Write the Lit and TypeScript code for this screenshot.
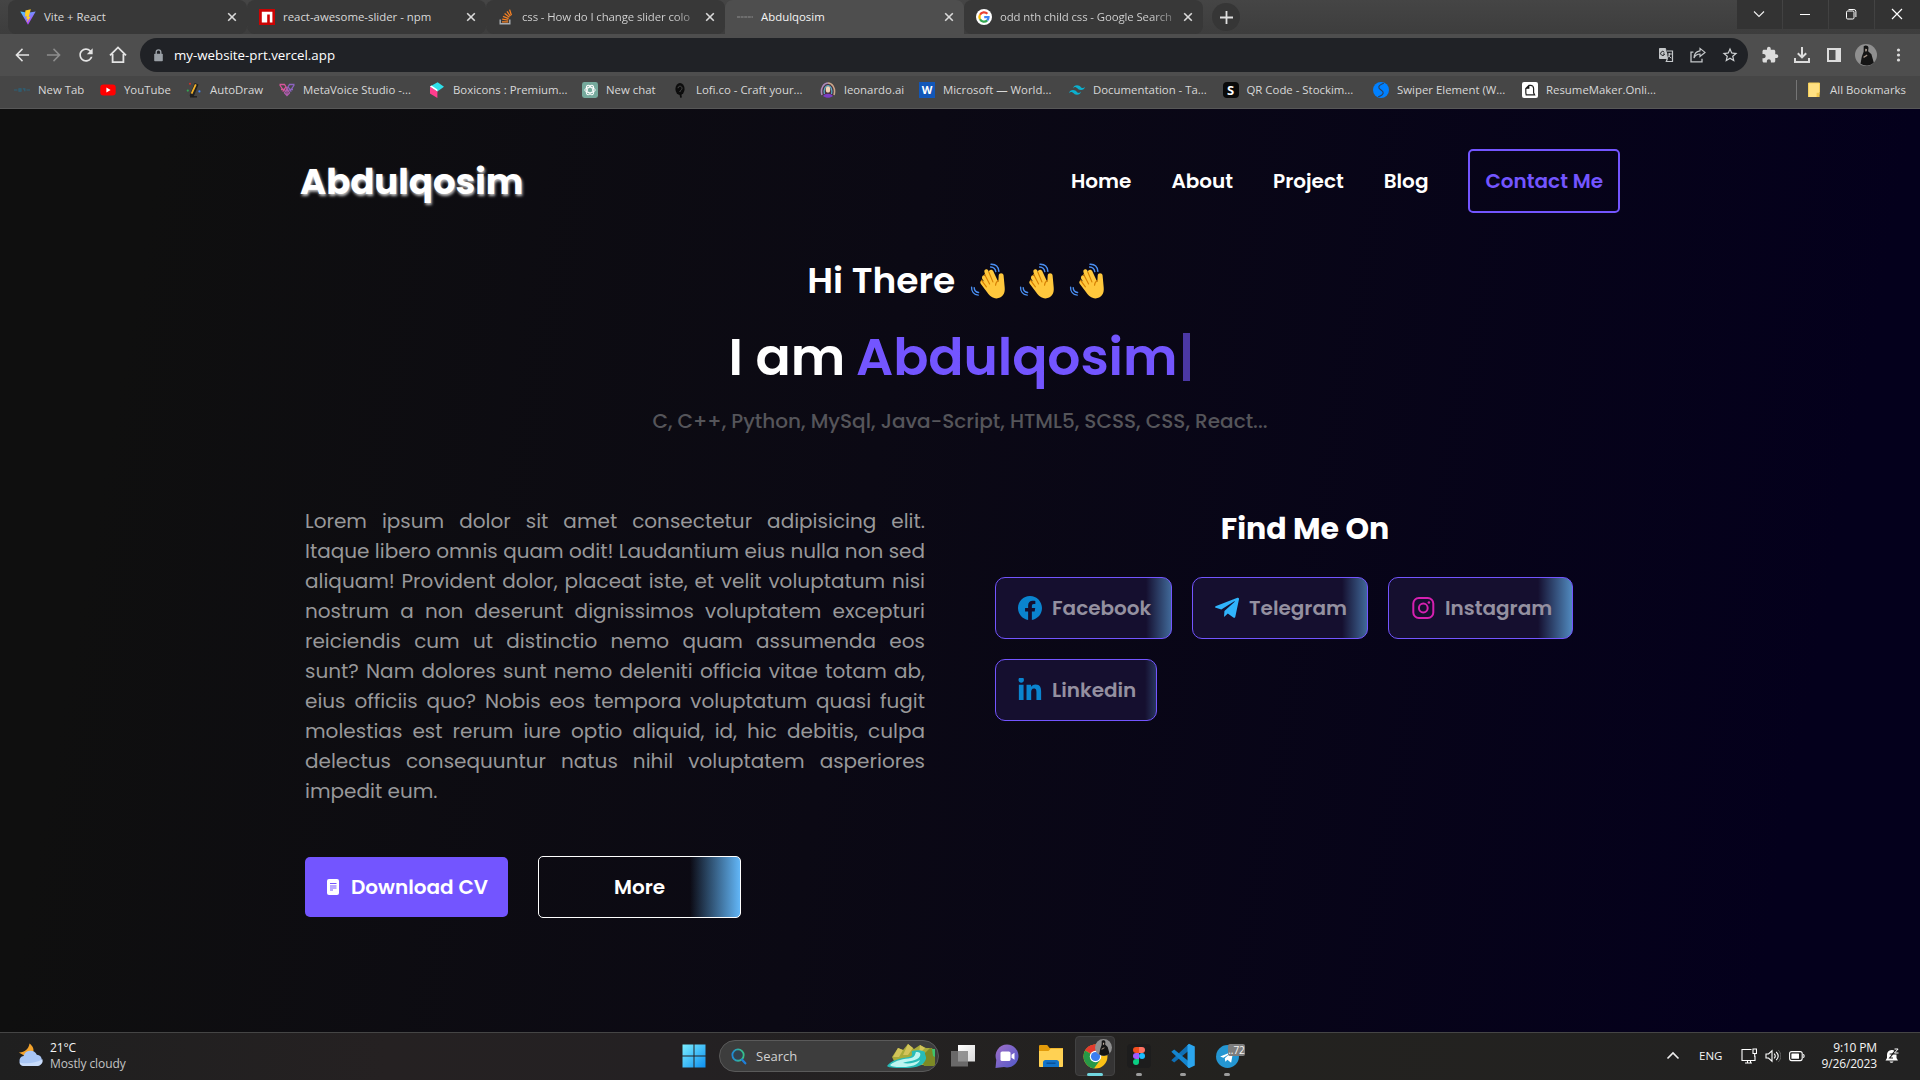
import { LitElement, html, css, svg, TemplateResult } from "lit";
import { customElement } from "lit/decorators.js";

/* ---------- shared drawing helpers ---------- */

const icon = (size: number, box: string, body: TemplateResult | TemplateResult[]) =>
  html`<svg class="ico" width=${size} height=${size} viewBox=${box} fill="none">${body}</svg>`;

const portrait = (size: number) =>
  icon(size, "0 0 24 24", svg`
    <circle cx="12" cy="12" r="12" fill="#8f8f8f"/>
    <path d="M9.5 2.5c2-1.6 5-.8 5.2 1.7l-.4 3.6 3.6 3.4 2.6 9.2A12 12 0 0 1 6 21.500L7.400 14l2-5.600z" fill="#141414"/>
    <path d="M11.2 5.2l1.8.2-.2 2.6-1.6.2z" fill="#b9a89b"/><path d="M9 14l4-2.5.6 1.2-4 2.6z" fill="#a59488"/>`);

const cross = icon(10, "0 0 10 10", svg`<path d="M1.2 1.2l7.6 7.6M8.8 1.2L1.2 8.8" stroke="#dadada" stroke-width="1.6"/>`);

/* ---------- favicons ---------- */

const viteIcon = icon(16, "0 0 16 16", svg`
  <defs><linearGradient id="v" x1="0" y1="0" x2=".6" y2="1"><stop stop-color="#41d1ff"/><stop offset="1" stop-color="#bd34fe"/></linearGradient></defs>
  <path d="M.3 2.4L8 15.8l7.7-13.4L8 3.8z" fill="url(#v)"/><path d="M10.8.3L5.4 1.4 5 7.6l1.9-.4-.6 3 1.5-.5-.9 4 3.6-6-1.8.4z" fill="#ffcf26"/>`);
const npmIcon = icon(16, "0 0 16 16", svg`<path d="M0 0h16v16H0z" fill="#cb0303"/><path d="M2.8 2.8h10.6v10.6h-2.6V5.6H8.2v7.8H2.8z" fill="#fff"/>`);
const stackIcon = icon(16, "0 0 16 16", svg`
  <path d="M2.2 10.4v4.4h9.6v-4.4" stroke="#a9adb2" stroke-width="1.4"/>
  <path d="M4 12.8h6.2M4.2 10.2l6 .9M5 7.4l5.6 2.2M6.6 4.6l4.8 3.6M9 2.4l3.4 4.8M11.6.6l1.8 5.6" stroke="#f48024" stroke-width="1.3"/>`);
const dashIcon = icon(16, "0 0 16 16", svg`<path d="M0 8h16" stroke="#797979" stroke-width="1.4" stroke-dasharray="3 .6"/>`);
const googleIcon = icon(16, "0 0 16 16", svg`
  <circle cx="8" cy="8" r="8" fill="#fff"/>
  <g stroke-width="2.3"><path d="M11.4 4.8A4.6 4.6 0 0 0 4 5.8" stroke="#ea4335"/><path d="M4 5.8a4.6 4.6 0 0 0 0 4.5" stroke="#fbbc05"/>
  <path d="M4 10.3a4.6 4.6 0 0 0 7.2 1.1" stroke="#34a853"/><path d="M11.2 11.4A4.4 4.4 0 0 0 12.5 8.1H8.2" stroke="#4285f4"/></g>`);

/* ---------- bookmark icons ---------- */

const youtubeIcon = icon(16, "0 0 16 16", svg`<rect x=".3" y="2.4" width="15.4" height="11.2" rx="3" fill="#f00"/><path d="M6.4 5.5l4.2 2.5-4.2 2.5z" fill="#fff"/>`);
const newTabIcon = icon(16, "0 0 16 16", svg`<path d="M0 8h3.4M5 6.8h2v2.4H5zM8.8 6.8h2v2.4M12.4 8H16" stroke="#2d6178" stroke-width="1.2"/>`);
const drawIcon = icon(16, "0 0 16 16", svg`
  <path d="M5.400 14.400L10.600 1.8" stroke="#202020" stroke-width="4.200"/><path d="M5.6 11.6L9.8 2.4" stroke="#f3b229" stroke-width="1.8"/>
  <path d="M4 14.8h7" stroke="#1d1d1d" stroke-width="1.4"/><circle cx="1.8" cy="8.6" r="1.1" fill="#34a853"/><circle cx="4" cy="1.8" r="1" fill="#d93025"/><circle cx="13.4" cy="9.4" r="1.1" fill="#4285f4"/>`);
const metaIcon = icon(16, "0 0 16 16", svg`
  <g stroke-width="1.300"><path d="M.5 2.500h5L8 6.500M.8 3l3.600 5.400L7 4.800M2 7.500h4M3.600 9.500l2.400-2" stroke="#d8559b"/><path d="M8 6.500l2.500-4h5M15.200 3l-3.600 5.400L9 4.800M10 7.500h4M12.400 9.500L10 7.500" stroke="#8d63c0"/><path d="M8 6.500L5.500 11l2.500 2.500 2.500-2.500zM8 6.500v7" stroke="#b05cae"/></g>`);
const boxIcon = icon(16, "0 0 16 16", svg`<path d="M1 4.4L8.6.3 15 4.8 8.4 9.4z" fill="#2fe0ea"/><path d="M1 4.4l7.4 5V16L1 11.5z" fill="#ff3d8d"/><path d="M1 4.4L2.4 3.6 8.4 7.6v1.8z" fill="#fff"/>`);
const chatIcon = icon(16, "0 0 16 16", svg`
  <rect width="16" height="16" rx="2.4" fill="#75a99c"/>
  <g stroke="#fff" stroke-width=".9"><ellipse cx="8" cy="8" rx="5.2" ry="2.7"/><ellipse cx="8" cy="8" rx="5.2" ry="2.7" transform="rotate(60 8 8)"/><ellipse cx="8" cy="8" rx="5.2" ry="2.7" transform="rotate(120 8 8)"/></g>`);
const lofiIcon = icon(16, "0 0 16 16", svg`<ellipse cx="8" cy="7" rx="4.6" ry="6" fill="#0c0c0c"/><path d="M6 6.2c0-2.6 4-2.8 4 .2 0 2-2.2 1.8-2.2 3.6" stroke="#4a4a4a"/><path d="M8.4 12l.6 3.6" stroke="#0c0c0c" stroke-width="1.8"/>`);
const leoIcon = icon(16, "0 0 16 16", svg`
  <circle cx="8" cy="8" r="7.4" fill="#4a3040"/><path d="M2 13C0 6 4 1 8 1" stroke="#a98bb8" stroke-width="1.6"/><path d="M14 13c2-7-2-12-6-12" stroke="#c9a98a" stroke-width="1.6"/>
  <path d="M4.4 12c-1-5 1-8.4 3.6-8.4S12.600 7 11.600 12" stroke="#58b3c8" stroke-width="1.2"/><ellipse cx="8" cy="7.4" rx="2.2" ry="3.2" fill="#f1d5b8"/><path d="M3 14c2-3 8-3 10 0-3 2.400-7 2.400-10 0z" fill="#7b3fc4"/>`);
const wordIcon = html`<span class="tile word">W</span>`;
const tailwindIcon = icon(16, "0 0 24 24", svg`<path fill="#0bb1cf" d="M12 4.800c-3.200 0-5.200 1.600-6 4.800 1.200-1.600 2.600-2.200 4.200-1.800.913.228 1.565.89 2.288 1.624C13.666 10.618 15.027 12 18.001 12c3.200 0 5.200-1.600 6-4.800-1.200 1.600-2.600 2.200-4.200 1.800-.913-.228-1.565-.89-2.288-1.624C16.337 6.182 14.976 4.800 12.001 4.800zM6 12c-3.200 0-5.200 1.600-6 4.800 1.200-1.600 2.600-2.200 4.200-1.800.913.228 1.565.89 2.288 1.624 1.177 1.194 2.538 2.576 5.512 2.576 3.200 0 5.200-1.600 6-4.800-1.200 1.600-2.600 2.200-4.200 1.800-.913-.228-1.565-.89-2.288-1.624C10.337 13.382 8.976 12 6.001 12z"/>`);
const stockIcon = html`<span class="tile stock">S</span>`;
const swiperIcon = icon(16, "0 0 16 16", svg`<circle cx="8" cy="8" r="8" fill="#0080ff"/><path d="M10.800 1.200C4 3.600 5.200 6.200 8 8s4 4.400-2.800 6.800" stroke="#2c3e58" stroke-width="1.100"/>`);
const resumeIcon = icon(16, "0 0 16 16", svg`<rect width="16" height="16" rx="2" fill="#fff"/><path d="M4.200 12.800h8.400l-1-2V6.400a3 3 0 0 0-3-3H7L3.800 6.600v4z" stroke="#222" stroke-width="1.200"/><path d="M7.400 3v3.800H3.600z" fill="#111"/>`);
const folderIcon = icon(16, "0 0 16 16", svg`<path d="M2.500 1h11v11l-1.500 3h-9.500z" fill="#ffe082"/><path d="M2.500 15V1h11v9.500" stroke="#f5cf5a" stroke-width="1"/><path d="M10.600 15v-4.200h3V15z" fill="#f0c64e"/>`);

/* ---------- page icons ---------- */

const wave = svg`
  <path fill="#ffc83d" d="M12.300 16.200c-1-2.800 2.100-3.900 3.400-1.700l-1.300-4.400c-.8-3 2.700-4.100 3.900-1.500l.6 1.700c-.5-3 3.300-3.600 4.400-1.100l5 10.700.4-6.300c.2-3.300 4.600-3.200 4.900-.1l1.100 12.100c.7 6.500-2.800 10.800-8.100 10.800-4.500 0-7-2.700-9.300-5.800l-6.600-8.800c-1.500-2.400 1.100-4.500 3-2.500l.7.700-2.100-3c-1.500-2.700 1.700-4.700 3.500-2.300z"/>
  <path stroke="#d67d00" stroke-width="1.100" stroke-linecap="round" d="M11.400 18.200l5 6.600M14.700 12.600l4.900 9.300M18.900 10.200l4 9.700M28.400 18.500c-1.900 1.100-2.800 2.700-2.800 4.800"/>
  <path stroke="#4a8ef0" stroke-width="1.400" stroke-linecap="round" d="M21 2.300c4.400-.2 7.400 2.600 7.900 7M20.600 5c2.800.1 4.700 1.800 5.200 4.600M1.600 25.200c-.3 4.200 2.400 7.400 6.600 7.900M4.200 25.600c.1 2.600 1.800 4.500 4.400 4.900"/>`;
const facebook = svg`<path fill="#0a84cf" transform="scale(1.5)" d="M16 8.049c0-4.446-3.582-8.050-8-8.050C3.580 0-.002 3.603-.002 8.050c0 4.017 2.926 7.347 6.750 7.951v-5.625h-2.030V8.050H6.750V6.275c0-2.017 1.195-3.131 3.022-3.131.876 0 1.791.157 1.791.157v1.980h-1.009c-.993 0-1.303.621-1.303 1.258v1.510h2.218l-.354 2.326H9.250V16c3.824-.604 6.750-3.934 6.750-7.951"/>`;
const telegram = svg`<path fill="#30b4fb" transform="scale(.0536) translate(0 -32)" d="M446.700 98.600l-67.600 318.800c-5.100 22.500-18.400 28.100-37.300 17.500l-103-75.900-49.700 47.800c-5.500 5.500-10.100 10.100-20.700 10.100l7.400-104.900 190.900-172.500c8.300-7.400-1.800-11.500-12.900-4.100L117.800 284 16.200 252.200c-22.100-6.900-22.500-22.100 4.600-32.700L418.200 66.400c18.400-6.900 34.500 4.100 28.500 32.200z"/>`;
const instagram = svg`<g stroke="#d620b0" stroke-width="2"><rect x="2.300" y="2" width="20" height="20" rx="5.600"/><circle cx="12.300" cy="12" r="4.400"/></g><circle cx="17.900" cy="6.500" r="1.300" fill="#d620b0"/>`;
const linkedin = svg`<path fill="#0a84cf" transform="scale(.0505) translate(10 -14)" d="M100.280 448H7.4V148.900h92.880zM53.790 108.100C24.090 108.100 0 83.500 0 53.800a53.790 53.790 0 0 1 107.580 0c0 29.700-24.100 54.300-53.790 54.300zM447.900 448h-92.680V302.400c0-34.700-.7-79.200-48.290-79.200-48.290 0-55.690 37.700-55.690 76.700V448h-92.780V148.900h89.080v40.800h1.300c12.400-23.500 42.690-48.300 87.880-48.300 94 0 111.280 61.900 111.280 142.300V448z"/>`;

/* ---------- taskbar icons ---------- */

const windowsIcon = icon(24, "0 0 24 24", svg`
  <defs><linearGradient id="w" x1="0" y1="0" x2="24" y2="24" gradientUnits="userSpaceOnUse"><stop stop-color="#7df0ff"/><stop offset="1" stop-color="#0a8df0"/></linearGradient></defs>
  <path fill="url(#w)" d="M.5.500h11v11H.5zM12.500.500h11v11h-11zM.5 12.500h11v11H.5zM12.500 12.500h11v11h-11z"/>`);
const searchIcon = icon(17, "0 0 18 18", svg`
  <defs><linearGradient id="s" x1="0" y1="0" x2="1" y2="0"><stop stop-color="#1f8ad8"/><stop offset=".6" stop-color="#35b49a"/><stop offset="1" stop-color="#35c08a"/></linearGradient></defs>
  <circle cx="8.500" cy="7.500" r="6" stroke="url(#s)" stroke-width="1.900" fill="#33414e"/><path d="M12.800 12.400l3.400 3.800" stroke="#1f7fd8" stroke-width="2.400" stroke-linecap="round"/>`);
const lake = html`<svg class="lake" width="50" height="26" viewBox="0 0 50 26" fill="none">
  ${svg`<path d="M6 14L12 5l5 2 5-6 6 5 6-4 6 3 6 0 2 8v9H10z" fill="#a8ab3a"/><path d="M12 5l5 2-4 7H7zM22 1l5 4-5 7h-5zM34 2l5 3-6 6z" fill="#d3c45a"/>
  <path d="M44 5c4 0 5 4 5 8v10H38c-2-4-1-10 1-13z" fill="#7d8a25"/><path d="M46 6h3v8l-2-1z" fill="#3fc46f"/>
  <path d="M1 23c4-6 14-8 22-9 5-1 2-4 3-6 4-1 10-1 13 1-1 3 3 5 0 9-3 6-12 7-20 7C11 25 3 25 1 23z" fill="#27bcb8"/>
  <path d="M4 22c6-5 14-6 21-7 4-1 4-4 5-6 4 0 5 1 4 4-2 5-13 5-17 7 6 1 12 0 17-3-2 5-9 7-17 7-6 0-11 0-13-2z" fill="#bdf5f0"/>`}</svg>`;
const taskView = icon(26, "0 0 26 26", svg`
  <defs><linearGradient id="t" x1="0" y1="0" x2="1" y2="1"><stop stop-color="#fff"/><stop offset="1" stop-color="#d9d9d9"/></linearGradient></defs>
  <path d="M8 2h17v16.500H8z" fill="url(#t)"/><path d="M1 8h17v15.500H1z" fill="#7c7c7c" fill-opacity=".8"/>`);
const meet = icon(26, "0 0 26 26", svg`
  <defs><linearGradient id="m" x1="0" y1="0" x2="1" y2="1"><stop stop-color="#a06fc8"/><stop offset="1" stop-color="#5059c9"/></linearGradient></defs>
  <path d="M13 1.500a11.500 11.500 0 1 1-3 22.600L1.500 25l.8-8A11.500 11.500 0 0 1 13 1.500z" fill="url(#m)"/><rect x="6.500" y="8.500" width="10" height="9.500" rx="1.600" fill="#fff"/><path d="M17.500 11.700l3-2v7l-3-2z" fill="#fff"/>`);
const explorer = icon(26, "0 0 26 26", svg`
  <path d="M1 3.200C1 2.300 1.600 2 2.400 2h6.800l2.400 3H25v6H1z" fill="#e29a0a"/><path d="M1 8h9.500l2.200-2.500H25V23c0 .7-.4 1-1 1H2c-.7 0-1-.3-1-1z" fill="#ffd153"/>
  <path d="M5 24v-4.600C5 18 6 17 7.400 17h11.200c1.400 0 2.400 1 2.400 2.400V24z" fill="#1273c8"/><path d="M8.500 20.200h9" stroke="#0a4f94" stroke-width="1.400"/>`);
const chrome = icon(25, "0 0 24 24", svg`
  <circle cx="12" cy="12" r="11.500" fill="#fbc116"/><path d="M12 12L2 6.300A11.500 11.500 0 0 1 22 6.300H12z" fill="#e33b2e"/>
  <path d="M12 12L2 6.300a11.500 11.500 0 0 0 8.500 17.100L16.900 14.900z" fill="#279847"/><path d="M2 6.300A11.500 11.500 0 0 1 22 6.300H12z" fill="#e33b2e"/>
  <circle cx="12" cy="12" r="5.500" fill="#fff"/><circle cx="12" cy="12" r="4.400" fill="#3b7ef0"/>`);
const figma = icon(24, "0 0 24 24", svg`
  <rect width="24" height="24" rx="4" fill="#1d1d1d"/><path d="M12 3H9a3 3 0 0 0 0 6h3z" fill="#f24e1e"/><path d="M12 3h3a3 3 0 0 1 0 6h-3z" fill="#ff7262"/>
  <path d="M12 9H9a3 3 0 0 0 0 6h3z" fill="#a259ff"/><circle cx="15" cy="12" r="3" fill="#1abcfe"/><path d="M12 15H9a3 3 0 1 0 3 3z" fill="#0acf83"/>`);
const vscode = icon(26, "0 0 26 26", svg`
  <path d="M19 .8L19 7.600 4.200 19.400 1.300 17.200z" fill="#0f6fb5"/><path d="M1.300 8.800L4.200 6.600 19 18.400v6.800z" fill="#1485cf"/><path d="M19 .8l5.800 2.700v19L19 25.200l-1.500-1.400V2.200z" fill="#2ba5ee"/>`);
const telegramApp = icon(25, "0 0 24 24", svg`<circle cx="12" cy="12" r="11" fill="#2496d2"/><path d="M5 11.900l12.500-5-2 11-3.600-2.700-2 1.900-.5-3.400 5-4.600-6.400 4z" fill="#fff"/>`);

const TABS = [
  { icon: viteIcon, title: "Vite + React", width: 239 },
  { icon: npmIcon, title: "react-awesome-slider - npm", width: 239 },
  { icon: stackIcon, title: "css - How do I change slider colo", width: 239, fade: true },
  { icon: dashIcon, title: "Abdulqosim", width: 239, active: true },
  { icon: googleIcon, title: "odd nth child css - Google Search", width: 239, fade: true },
];

const BOOKMARKS: [TemplateResult, string, number][] = [
  [newTabIcon, "New Tab", 86], [youtubeIcon, "YouTube", 86], [drawIcon, "AutoDraw", 93],
  [metaIcon, "MetaVoice Studio -...", 150], [boxIcon, "Boxicons : Premium...", 153], [chatIcon, "New chat", 90],
  [lofiIcon, "Lofi.co - Craft your...", 148], [leoIcon, "leonardo.ai", 99], [wordIcon, "Microsoft — World...", 150],
  [tailwindIcon, "Documentation - Ta...", 153.500], [stockIcon, "QR Code - Stockim...", 150.500], [swiperIcon, "Swiper Element (W...", 149],
  [resumeIcon, "ResumeMaker.Onli...", 160],
];

@customElement("browser-chrome")
export class BrowserChrome extends LitElement {
  static styles = css`
    :host { display: block; font: 11.4px "Open Sans", sans-serif; color: #d8d8d8; }
    .ico { display: block; flex: none; }
    .strip { display: flex; height: 34px; background: linear-gradient(#454545, #3d3d3d); }
    .tabs { display: flex; padding-left: 8px; }
    .tab { display: flex; align-items: center; box-sizing: border-box; height: 34px; padding: 0 10px 0 12px; background: #383838; border-radius: 8px; position: relative; }
    .tab.sep::after { content: ""; position: absolute; right: -1px; top: 7px; height: 20px; width: 1px; background: #6a6a6a; }
    .tab.active { background: #4e4e4e; color: #f4f4f4; border-radius: 8px 8px 0 0; }
    .title { flex: 1; margin: 0 4px 2px 8px; white-space: nowrap; }
    .fade .title { letter-spacing: -.1px; color: transparent; background: linear-gradient(90deg, #d8d8d8 152px, #d8d8d850 174px); background-clip: text; -webkit-background-clip: text; }
    .add { width: 28px; height: 28px; border-radius: 14px; background: #363636; display: grid; place-items: center; margin: 3px 0 0 9px; }
    .win { margin-left: auto; display: flex; gap: 1px; height: 29px; }
    .win span { box-sizing: border-box; width: 45px; padding: 0 2px 2px 0; background: #333; display: grid; place-items: center; }
    .bar { display: flex; align-items: center; height: 42px; background: #4e4e4e; padding-left: 6px; }
    .btn { width: 32px; display: grid; place-items: center; flex: none; }
    .omni { display: flex; align-items: center; width: 1608px; height: 34px; box-sizing: border-box; padding: 0 2px 0 12px; margin: 0 6px; border-radius: 17px; background: #202226; font-size: 13.3px; color: #fff; }
    .url { flex: 1; padding-left: 9px; }
    .marks { display: flex; align-items: center; box-sizing: border-box; height: 33px; padding: 0 14px 4px; background: #464646; border-bottom: 1px solid #575757; }
    .mark { display: flex; align-items: center; gap: 8px; white-space: nowrap; height: 28px; }
    .mark > span:last-child { padding-bottom: 1px; }
    .all { margin-left: auto; border-left: 1px solid #757575; height: 20px; padding-left: 9px; }
    .tile { width: 16px; height: 16px; display: grid; place-items: center; font: 700 11px/16px "Open Sans", sans-serif; color: #fff; flex: none; }
    .word { background: #1257b8; }
    .stock { background: #0a0a0a; border-radius: 4px; font-size: 13px; }
  `;

  render() {
    return html`
      <div class="strip">
        <div class="tabs">
          ${TABS.map((t, i) => html`<div class="tab ${t.active ? "active" : ""} ${t.fade ? "fade" : ""} ${i < 2 ? "sep" : ""}" style="width:${t.width}px">${t.icon}<span class="title">${t.title}</span>${cross}</div>`)}
        </div>
        <span class="add">${icon(13, "0 0 13 13", svg`<path d="M6.500 0v13M0 6.500h13" stroke="#e0e0e0" stroke-width="1.800"/>`)}</span>
        <div class="win">
          <span>${icon(12, "0 0 12 12", svg`<path d="M1 3.500l5 5 5-5" stroke="#f2f2f2" stroke-width="1.100"/>`)}</span>
          <span>${icon(12, "0 0 12 12", svg`<path d="M1 6.500h10" stroke="#fff"/>`)}</span>
          <span>${icon(12, "0 0 12 12", svg`<rect x="1.500" y="3" width="7.500" height="8" rx="1.200" stroke="#fff"/><path d="M3.500 1.500h5.400a2 2 0 0 1 2 2v5.500" stroke="#fff"/>`)}</span>
          <span>${icon(12, "0 0 12 12", svg`<path d="M1 1l10 10M11 1L1 11" stroke="#fff" stroke-width="1.200"/>`)}</span>
        </div>
      </div>
      <div class="bar">
        <span class="btn">${icon(20, "0 0 24 24", svg`<path fill="#e4e4e4" d="M20.500 11H7.600l5.600-5.600L12 4l-8 8 8 8 1.200-1.400L7.600 13h12.900z"/>`)}</span>
        <span class="btn">${icon(20, "0 0 24 24", svg`<path fill="#8d8d8d" d="M12 4l-1.200 1.400L16.400 11H3.500v2h12.900l-5.600 5.600L12 20l8-8z"/>`)}</span>
        <span class="btn">${icon(20, "0 0 24 24", svg`<path fill="#e4e4e4" d="M17.650 6.350C16.200 4.900 14.210 4 12 4c-4.420 0-7.990 3.580-7.990 8s3.570 8 7.990 8c3.730 0 6.840-2.550 7.730-6h-2.080c-.82 2.330-3.040 4-5.650 4-3.310 0-6-2.690-6-6s2.690-6 6-6c1.660 0 3.140.69 4.220 1.780L13 11h7V4z"/>`)}</span>
        <span class="btn">${icon(20, "0 0 20 20", svg`<path d="M4.600 9v8.200h10.800V9M2 10.400l8-8 8 8" stroke="#e4e4e4" stroke-width="1.800"/>`)}</span>
        <div class="omni">
          ${icon(13, "0 0 13 13", svg`<rect x="2.200" y="4.800" width="8.600" height="7.400" rx=".8" fill="#9aa0a6"/><path d="M4.200 5V3.200a2.300 2.300 0 0 1 4.600 0V5" stroke="#9aa0a6" stroke-width="1.400"/>`)}
          <span class="url">my-website-prt.vercel.app</span>
          <span class="btn">${icon(16, "0 0 16 16", svg`<path d="M1.500 1.500h6l2 10h-8z" fill="#c4c7c9" stroke="#c4c7c9"/><path d="M6.300 5.300A2 2 0 1 0 6.600 7H5" stroke="#202226"/><path d="M9 4h5.500v10.500H8.300l1-2.800" stroke="#c4c7c9" stroke-width="1.200"/><path d="M9.600 7h4.200M11.600 6v1c0 1.600-.8 2.800-1.800 3.600M10.600 8.500c.6 1.200 1.600 2 2.800 2.600" stroke="#c4c7c9"/>`)}</span>
          <span class="btn">${icon(16, "0 0 16 16", svg`<path d="M3.400 5.200H1v9.600h11v-3" stroke="#c4c7c9" stroke-width="1.300"/><path d="M10 1.400l5 4-5 4V7C7 7 5.200 8.600 4 11c.2-4 2.400-6.800 6-7.200z" stroke="#c4c7c9" stroke-width="1.200"/>`)}</span>
          <span class="btn">${icon(18, "0 0 24 24", svg`<path fill="#d0d3d5" d="M22 9.240l-7.190-.62L12 2 9.190 8.630 2 9.240l5.460 4.730L5.820 21 12 17.270 18.180 21l-1.630-7.030L22 9.240zM12 15.400l-3.760 2.270 1-4.280-3.320-2.880 4.380-.38L12 6.100l1.710 4.040 4.380.38-3.320 2.880 1 4.280L12 15.400z"/>`)}</span>
        </div>
        <span class="btn">${icon(18, "0 0 24 24", svg`<path fill="#dcdcdc" d="M20.500 11H19V7c0-1.100-.9-2-2-2h-4V3.500C13 2.120 11.880 1 10.500 1S8 2.120 8 3.500V5H4c-1.100 0-1.990.9-1.990 2v3.800H3.500c1.490 0 2.700 1.210 2.700 2.700s-1.210 2.700-2.700 2.700H2V20c0 1.100.9 2 2 2h3.800v-1.500c0-1.490 1.210-2.700 2.700-2.700 1.490 0 2.700 1.210 2.700 2.700V22H17c1.100 0 2-.9 2-2v-4h1.500c1.380 0 2.500-1.120 2.500-2.500S21.880 11 20.500 11z"/>`)}</span>
        <span class="btn">${icon(18, "0 0 18 18", svg`<path d="M9 1v10M4.800 7.200L9 11.400l4.200-4.200M2 12v4h14v-4" stroke="#dcdcdc" stroke-width="2"/>`)}</span>
        <span class="btn">${icon(16, "0 0 16 16", svg`<rect x="2" y="2" width="12" height="12" stroke="#dcdcdc" stroke-width="2"/><path d="M9.500 2h5v12h-5z" fill="#dcdcdc"/>`)}</span>
        <span class="btn">${portrait(22)}</span>
        <span class="btn">${icon(16, "0 0 16 16", svg`<g fill="#dcdcdc"><circle cx="8.500" cy="3" r="1.600"/><circle cx="8.500" cy="8" r="1.600"/><circle cx="8.500" cy="13" r="1.600"/></g>`)}</span>
      </div>
      <div class="marks">
        ${BOOKMARKS.map(([ic, label, w]) => html`<div class="mark" style="width:${w}px">${ic}<span>${label}</span></div>`)}
        <div class="mark all">${folderIcon}<span>All Bookmarks</span></div>
      </div>`;
  }
}

const LINES = [
  "Lorem ipsum dolor sit amet consectetur adipisicing elit.",
  "Itaque libero omnis quam odit! Laudantium eius nulla non sed",
  "aliquam! Provident dolor, placeat iste, et velit voluptatum nisi",
  "nostrum a non deserunt dignissimos voluptatem excepturi",
  "reiciendis cum ut distinctio nemo quam assumenda eos",
  "sunt? Nam dolores sunt nemo deleniti officia vitae totam ab,",
  "eius officiis quo? Nobis eos tempora voluptatum quasi fugit",
  "molestias est rerum iure optio aliquid, id, hic debitis, culpa",
  "delectus consequuntur natus nihil voluptatem asperiores",
  "impedit eum.",
];

/* "hidden" is how far the 42px glow strip sits beyond the chip's right edge */
const SOCIAL = [
  { name: "Facebook", glyph: facebook, width: 177, hidden: 17 },
  { name: "Telegram", glyph: telegram, width: 176, hidden: 17 },
  { name: "Instagram", glyph: instagram, width: 185, hidden: 8 },
  { name: "Linkedin", glyph: linkedin, width: 162, hidden: 31 },
];

@customElement("portfolio-page")
export class PortfolioPage extends LitElement {
  static styles = css`
    :host { display: block; font: 20px/30px Poppins, sans-serif; color: #fff; background: linear-gradient(100deg, #0f0f0f 8%, #0b0914 45%, #04001c 92%); }
    .ico { display: block; flex: none; }
    .wrap { width: 1320px; margin: 0 auto; padding-top: 40px; }
    header { display: flex; align-items: center; height: 64px; }
    .logo { font-size: 35.500px; font-weight: 700; line-height: 64px; padding-top: 2px; text-shadow: 1px 2px 3px #ffffffc0; }
    nav { margin-left: auto; display: flex; align-items: center; gap: 40px; font-weight: 600; }
    .contact { box-sizing: border-box; height: 64px; line-height: 60px; padding: 0 15px; border: 2px solid #7355ff; border-radius: 5px; color: #7355ff; }
    .hero { display: flex; flex-direction: column; align-items: center; margin-top: 41px; }
    .hi { display: flex; align-items: center; gap: 11.500px; padding-right: 6px; font-size: 36px; font-weight: 600; line-height: 54px; }
    .hi span { margin-right: 3px; }
    .name { display: flex; align-items: center; font-size: 52px; font-weight: 600; line-height: 78px; margin-top: 10px; padding-right: 1px; white-space: pre; }
    .name b { font-weight: 600; color: #7355ff; margin-left: -1.500px; letter-spacing: -.1px; }
    .caret { width: 7px; height: 48px; margin-left: 6px; background: #4b38a5; }
    .skills { margin-top: 10px; font-weight: 500; color: #55555a; }
    .cols { display: grid; grid-template-columns: 620px 620px; column-gap: 70px; margin: 70px 0 0 5px; }
    .text div { text-align: justify; text-align-last: justify; color: #98989a; }
    .text div:last-child { text-align-last: left; }
    .actions { display: flex; align-items: center; gap: 30px; margin-top: 50px; font-weight: 600; }
    .cv { display: flex; align-items: center; justify-content: center; gap: 10px; width: 203px; height: 60px; border-radius: 5px; background: #7355ff; }
    .more { box-sizing: border-box; width: 203px; height: 62px; line-height: 60px; text-align: center; border: 1px solid #fff; border-radius: 5px; background: linear-gradient(90deg, #62b6f700, #62b6f7) right / 50px 100% no-repeat; }
    h2 { margin: 0; text-align: center; font-size: 30px; font-weight: 700; line-height: 45px; }
    .chips { display: flex; flex-wrap: wrap; gap: 20px; margin-top: 26px; }
    .chip { display: flex; align-items: center; gap: 10px; box-sizing: border-box; height: 62px; padding-left: 22px; border: 1px solid #7355ff; border-radius: 10px; font-weight: 600; color: #9490a0; background: #150f2f linear-gradient(90deg, #5ea6e000, #5ea6e0) right / 42px 100% no-repeat; }
  `;

  render() {
    return html`<div class="wrap">
      <header>
        <div class="logo">Abdulqosim</div>
        <nav><span>Home</span><span>About</span><span>Project</span><span>Blog</span><span class="contact">Contact Me</span></nav>
      </header>
      <section class="hero">
        <div class="hi"><span>Hi There</span>${[0, 1, 2].map(() => icon(38, "0 0 38 38", wave))}</div>
        <div class="name">I am <b>Abdulqosim</b><i class="caret"></i></div>
        <div class="skills">C, C++, Python, MySql, Java-Script, HTML5, SCSS, CSS, React...</div>
      </section>
      <section class="cols">
        <div>
          <div class="text">${LINES.map(l => html`<div>${l}</div>`)}</div>
          <div class="actions">
            <div class="cv">${icon(16, "0 0 16 16", svg`<rect x="2" y="0" width="12" height="16" rx="2" fill="#fff"/><path d="M5 4.500h6.500M5 7h6.500M5 9h6.500M5 11h3" stroke="#7355ff"/>`)}<span>Download CV</span></div>
            <div class="more">More</div>
          </div>
        </div>
        <div>
          <h2>Find Me On</h2>
          <div class="chips">${SOCIAL.map(s => html`<div class="chip" style="width:${s.width}px;background-position-x:calc(100% + ${s.hidden}px)">${icon(24, "0 0 24 24", s.glyph)}<span>${s.name}</span></div>`)}</div>
        </div>
      </section>
    </div>`;
  }
}

@customElement("task-bar")
export class TaskBar extends LitElement {
  static styles = css`
    :host { display: grid; grid-template-columns: 672px 1fr auto; box-sizing: border-box; height: 48px; padding-bottom: 1px; border-top: 1px solid #454545; background: linear-gradient(90deg, #1f1f1f, #252122 20%, #242123 35%, #23221f 65%, #222 100%); font: 12px/16px "Open Sans", sans-serif; color: #f5f5f5; }
    .ico { display: block; flex: none; }
    .weather { display: flex; align-items: center; gap: 6px; padding-left: 18px; letter-spacing: -.1px; }
    .weather small { font-size: 12px; color: #c4c4c4; display: block; }
    .apps { display: flex; align-items: center; }
    .app { width: 44px; height: 40px; display: grid; place-items: center; position: relative; }
    .search { display: flex; align-items: center; box-sizing: border-box; width: 220px; height: 32px; margin: 0 2px 0 3px; padding: 0 2px 0 10px; border: 1px solid #5a5a5a; border-radius: 16px; background: #3d3d3d; font-size: 13px; color: #d2d2d2; overflow: hidden; }
    .search span { flex: 1; padding: 0 0 1px 9px; }
    .open::after { content: ""; position: absolute; left: 19px; bottom: 0; width: 6px; height: 3px; border-radius: 2px; background: #9c9c9c; }
    .front::before { content: ""; position: absolute; inset: 0 2px; border-radius: 4px; background: #353434; border: 1px solid #424242; box-sizing: border-box; }
    .open.front::after { left: 14px; width: 16px; background: #71d6df; }
    .front .ico { position: relative; }
    .who { position: absolute; left: 22px; top: 3px; }
    .count { position: absolute; left: 23px; top: 8px; width: 17px; height: 12px; border-radius: 2px; background: #7d7d7d; font-size: 10px; line-height: 12px; text-align: center; }
    .tray { display: flex; align-items: center; }
    .tray > * { flex: none; }
    .lang { width: 24px; margin: 0 18px 0 19px; font-size: 11.500px; }
    .status { display: flex; gap: 8px; }
    .clock { width: 68px; text-align: right; margin: 0 7px 0 4px; letter-spacing: -.15px; }
    .bell { margin-right: 20px; }
  `;

  render() {
    return html`
      <div class="weather">
        ${icon(26, "0 0 26 26", svg`
          <path d="M11.500.500c3.600 2.800 5 6 3.400 10L8 13.500.800 9.400C6 9.800 10.700 6.400 11.500.500z" fill="#f3a32c"/>
          <path d="M6 23a5 5 0 0 1-.4-9.900 7 7 0 0 1 13.200-1.300A5.700 5.700 0 0 1 19.600 23z" fill="#a9c6f5"/><path d="M6 23a5 5 0 0 1-4.600-3.600c6 1.600 16 1.200 23.200-3.200A5.700 5.700 0 0 1 19.600 23z" fill="#c9dcfb"/>`)}
        <div>21°C<small>Mostly cloudy</small></div>
      </div>
      <div class="apps">
        <div class="app">${windowsIcon}</div>
        <div class="search">${searchIcon}<span>Search</span>${lake}</div>
        <div class="app">${taskView}</div>
        <div class="app">${meet}</div>
        <div class="app">${explorer}</div>
        <div class="app open front">${chrome}<i class="who">${portrait(17)}</i></div>
        <div class="app open">${figma}</div>
        <div class="app open">${vscode}</div>
        <div class="app open">${telegramApp}<span class="count">..72</span></div>
      </div>
      <div class="tray">
        ${icon(14, "0 0 14 14", svg`<path d="M1.500 9.500L7 4l5.500 5.500" stroke="#eee" stroke-width="1.600"/>`)}
        <span class="lang">ENG</span>
        <span class="status">
          ${icon(16, "0 0 16 16", svg`<path d="M10.500 1.500H1v11h13V8M4 15h7M6.500 13v2M9.500 13v2M12 1h3.500v4.500H12zM13.700 6v3" stroke="#fff" stroke-width="1.100"/>`)}
          ${icon(16, "0 0 16 16", svg`<path d="M1 6h2.500L7 2.800v10.400L3.500 10H1z" stroke="#fff" stroke-width="1.100"/><path d="M9.200 5.600c1.300 1.500 1.300 3.300 0 4.800M11.200 3.800c2.400 2.500 2.400 5.900 0 8.400" stroke="#fff" stroke-width="1.100"/><path d="M13.400 2.200c3.200 3.500 3.200 8.100 0 11.600" stroke="#666"/>`)}
          ${icon(16, "0 0 16 16", svg`<rect x=".6" y="3.600" width="12.600" height="9" rx="2" stroke="#fff" stroke-width="1.100"/><rect x="2.400" y="5.400" width="7.600" height="5.400" rx=".5" fill="#fff"/><path d="M14 6.500c1.500 0 1.500 3 0 3" stroke="#fff" stroke-width="1.200"/>`)}
        </span>
        <div class="clock">9:10 PM<br>9/26/2023</div>
        <span class="bell">${icon(16, "0 0 16 16", svg`<path d="M7.500 2C4.600 2 3 4.200 3 6.800V10l-1.500 2.400h12.500L12.500 10V6.800C12.500 4 10.200 2 7.500 2zM5.500 13.400a2.100 2.100 0 0 0 4 0z" fill="#fff"/><path d="M5.600 6h3.200l-3.200 4h3.400" stroke="#222" stroke-width="1.100"/><path d="M10.500 1h3.600l-3.600 4h4" stroke="#222" stroke-width="3"/><path d="M10.500 1h3.600l-3.600 4h4" stroke="#fff"/>`)}</span>
      </div>`;
  }
}

@customElement("app-root")
export class AppRoot extends LitElement {
  static styles = css`
    :host { display: block; }
    .screen { display: grid; grid-template-rows: 109px 923px 48px; width: 1920px; height: 1080px; overflow: hidden; }
  `;

  render() {
    return html`<div class="screen"><browser-chrome></browser-chrome><portfolio-page></portfolio-page><task-bar></task-bar></div>`;
  }
}
